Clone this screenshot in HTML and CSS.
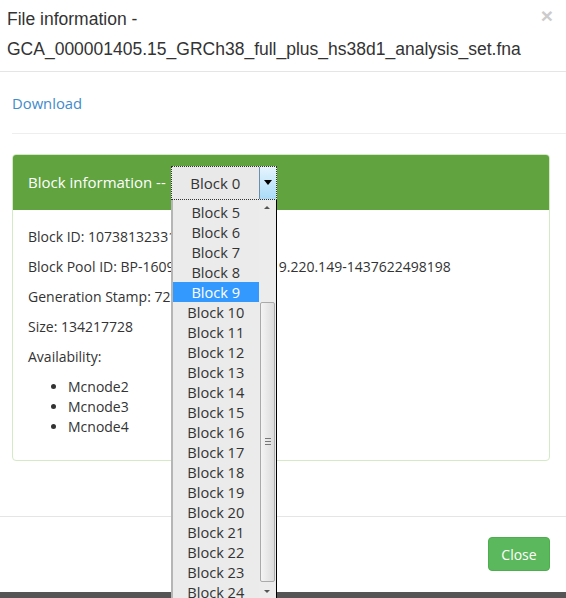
FILE: index.html
```html
<!DOCTYPE html>
<html lang="en">
<head>
    <meta charset="UTF-8">
    <title>File information</title>
    <link rel="stylesheet" href="styles.css">
</head>
<body>
    <div class="modal">
        <div class="modal-header">
            <span class="close">&times;</span>
            <h4 class="modal-title">File information - GCA_000001405.15_GRCh38_full_plus_hs38d1_analysis_set.fna</h4>
        </div>
        <div class="modal-body">
            <a href="#" class="download">Download</a>
            <hr>
            <div class="panel">
                <div class="panel-heading">
                    <span>Block information --</span>
                    <div class="select-wrap">
                        <div class="select">
                            <span class="select-value">Block 0</span>
                            <span class="select-btn"></span>
                        </div>
                        <!-- open dropdown list -->
                        <div class="dropdown">
                            <ul class="options">
                                <li>Block 5</li>
                                <li>Block 6</li>
                                <li>Block 7</li>
                                <li>Block 8</li>
                                <li class="selected">Block 9</li>
                                <li>Block 10</li>
                                <li>Block 11</li>
                                <li>Block 12</li>
                                <li>Block 13</li>
                                <li>Block 14</li>
                                <li>Block 15</li>
                                <li>Block 16</li>
                                <li>Block 17</li>
                                <li>Block 18</li>
                                <li>Block 19</li>
                                <li>Block 20</li>
                                <li>Block 21</li>
                                <li>Block 22</li>
                                <li>Block 23</li>
                                <li>Block 24</li>
                            </ul>
                            <div class="scrollbar">
                                <div class="arrow-up"></div>
                                <div class="thumb"><span class="grip"></span></div>
                                <div class="arrow-down"></div>
                            </div>
                        </div>
                    </div>
                </div>
                <div class="panel-body">
                    <p>Block ID: 10738132331</p>
                    <p>Block Pool ID: BP-16098372645-192.119.220.149-1437622498198</p>
                    <p>Generation Stamp: 72903</p>
                    <p>Size: 134217728</p>
                    <p>Availability:</p>
                    <ul class="nodes">
                        <li>Mcnode2</li>
                        <li>Mcnode3</li>
                        <li>Mcnode4</li>
                    </ul>
                </div>
            </div>
        </div>
        <div class="modal-footer">
            <button class="btn-close">Close</button>
        </div>
    </div>
    <div class="backdrop"></div>
</body>
</html>
```

FILE: styles.css
```css
html, body {
    margin: 0;
    padding: 0;
    background: #fff;
    overflow: hidden;
}

body {
    width: 566px;
    height: 598px;
    font-family: "Open Sans", "Noto Sans", sans-serif;
    font-size: 14px;
    color: #333;
}

.modal {
    height: 592px;
    background: #fff;
}

.modal-header {
    height: 72px;
    box-sizing: border-box;
    padding: 4px 16px 0 7px;
    border-bottom: 1px solid #e5e5e5;
    position: relative;
}

.modal-title {
    margin: 0;
    font-family: "Liberation Sans", Arial, sans-serif;
    font-weight: normal;
    font-size: 17.5px;
    line-height: 30px;
    color: #333;
}

.close {
    position: absolute;
    right: 13px;
    top: 4px;
    font-family: "Liberation Sans", Arial, sans-serif;
    font-size: 21px;
    font-weight: bold;
    color: #ccc;
}

.modal-body {
    padding: 20px 16px 0 12px;
    height: 445px;
    box-sizing: border-box;
    border-bottom: 1px solid #e5e5e5;
}

.download {
    display: block;
    color: #428bca;
    text-decoration: none;
    font-size: 14.8px;
    line-height: 22px;
}

hr {
    margin: 19px -16px 20px 0;
    border: 0;
    border-top: 1px solid #eee;
}

.panel {
    border: 1px solid #d6e9c6;
    border-radius: 4px;
}

.panel-heading {
    background: #60a33f;
    color: #fff;
    height: 55px;
    display: flex;
    align-items: center;
    padding-left: 15px;
    font-size: 15px;
    border-radius: 3px 3px 0 0;
}

.panel-heading > span {
    margin-right: 5px;
    margin-top: -2px;
}

.select-wrap {
    position: relative;
    margin-top: 1px;
}

.select {
    width: 106px;
    height: 34px;
    box-sizing: border-box;
    border: 1px dotted #333;
    background: #e9e9e9;
    display: flex;
    color: #333;
}

.select-value {
    flex: 1;
    text-align: center;
    line-height: 32px;
    font-size: 15px;
}

.select-btn {
    width: 16px;
    border-left: 1px solid #6b8fa8;
    background: linear-gradient(#e6f4fd, #a9dbf8);
    position: relative;
}

.select-btn::after {
    content: "";
    position: absolute;
    left: 4px;
    top: 13px;
    border-left: 4px solid transparent;
    border-right: 4px solid transparent;
    border-top: 5px solid #000;
}

.dropdown {
    position: absolute;
    left: 0;
    top: 34px;
    width: 106px;
    height: 400px;
    box-sizing: border-box;
    background: #ebebeb;
    border-left: 2px solid #b5b5b5;
    border-right: 1px solid #000;
    display: flex;
    z-index: 5;
}

.options {
    list-style: none;
    margin: 0;
    padding: 2px 0 0;
    flex: 1;
    color: #333;
    font-size: 14.6px;
}

.options li {
    height: 20px;
    line-height: 20px;
    text-align: center;
}

.options li.selected {
    background: #3399ff;
    color: #fff;
}

.scrollbar {
    width: 17px;
    background: #ececec;
    position: relative;
}

.arrow-up,
.arrow-down {
    height: 17px;
    position: relative;
}

.arrow-up::after,
.arrow-down::after {
    content: "";
    position: absolute;
    left: 5px;
    border-left: 3px solid transparent;
    border-right: 3px solid transparent;
}

.arrow-up::after {
    top: 6px;
    border-bottom: 3px solid #555;
}

.arrow-down::after {
    top: 7px;
    border-top: 3px solid #555;
}

.thumb {
    position: absolute;
    left: 1px;
    right: 1px;
    top: 102px;
    height: 280px;
    border: 1px solid #aaa;
    border-radius: 2px;
    background: linear-gradient(to right, #f4f4f4, #dcdcdc);
    box-sizing: border-box;
}

.grip {
    position: absolute;
    left: 4px;
    top: 135px;
    width: 6px;
    height: 5px;
    border-top: 1px solid #777;
    border-bottom: 1px solid #777;
}

.grip::after {
    content: "";
    position: absolute;
    left: 0;
    right: 0;
    top: 2px;
    border-top: 1px solid #777;
}

.arrow-down {
    position: absolute;
    bottom: 0;
    left: 0;
    right: 0;
}

.panel-body {
    padding: 17px 15px 13px;
    height: 250px;
    box-sizing: border-box;
}

.panel-body p {
    margin: 0 0 10px;
    line-height: 20px;
}

.nodes {
    margin: 0;
    padding-left: 40px;
    line-height: 20px;
}

.modal-footer {
    height: 74px;
    box-sizing: border-box;
    padding: 20px 16px 0 0;
    display: flex;
    justify-content: flex-end;
}

.btn-close {
    width: 62px;
    height: 34px;
    background: #5cb85c;
    border: 1px solid #4cae4c;
    border-radius: 4px;
    color: #fff;
    font-family: "Open Sans", "Noto Sans", sans-serif;
    font-size: 14px;
}

.backdrop {
    height: 6px;
    background: #555;
}
```
